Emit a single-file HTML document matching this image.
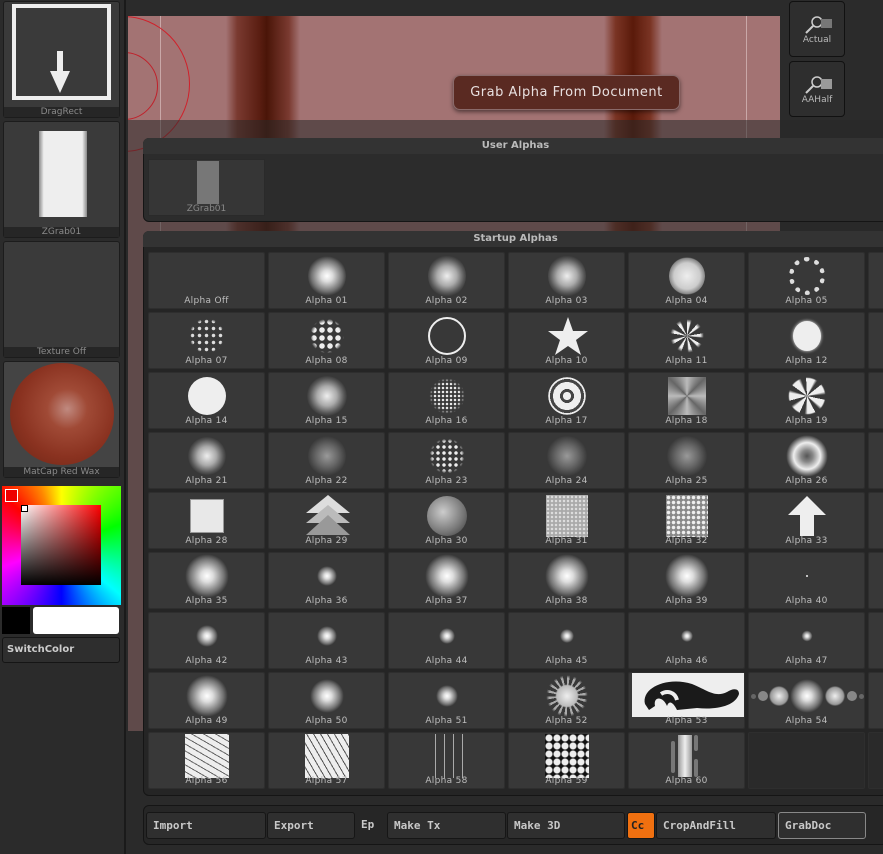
<!DOCTYPE html>
<html><head><meta charset="utf-8"><style>
*{margin:0;padding:0;box-sizing:border-box}
body{width:883px;height:854px;background:#2b2b2b;position:relative;overflow:hidden;font-family:"DejaVu Sans","Liberation Sans",sans-serif;}
.a{position:absolute}
.lp{position:absolute;left:3px;width:117px;background:#3a3a3a;border:1px solid #1c1c1c;border-radius:3px}
.lbl{position:absolute;left:0;right:0;bottom:0;height:10px;background:#262626;color:#8a8a8a;font-size:9px;text-align:center;line-height:10px}
.c{position:absolute;width:117px;height:57px;background:#383838;border:1px solid #2e2e2e;border-radius:2px}
.c span{position:absolute;left:0;right:0;bottom:2px;text-align:center;font-size:9px;color:#bdbdbd;letter-spacing:.3px}
.i{position:absolute;left:50%;top:23px;transform:translate(-50%,-50%);border-radius:50%}
.bl{background:radial-gradient(circle,#fff 0,#ddd 20%,rgba(200,200,200,.4) 55%,rgba(56,56,56,0) 70%)}
.tx{background:radial-gradient(circle,#eee 0,#aaa 35%,rgba(120,120,120,.5) 60%,rgba(56,56,56,0) 72%)}
.dk{background:radial-gradient(circle,#999 0,#666 40%,rgba(56,56,56,0) 72%)}
.dsk{background:#eee}
.btn{position:absolute;top:812px;height:27px;background:#2f2f2f;border:1px solid #161616;border-radius:3px;color:#c8c8c8;font-size:11px;font-weight:bold;line-height:25px;padding-left:6px;font-family:"DejaVu Sans Mono","Liberation Mono",monospace}
</style></head><body>
<!-- canvas -->
<div class="a" style="left:128px;top:16px;width:652px;height:715px;background:#a37373;overflow:hidden">
<div class="a" style="left:98px;top:0;width:74px;height:715px;background:linear-gradient(90deg,#a37373,#7a3a30 15%,#5a1e12 45%,#4a1508 55%,#7a3a30 85%,#a37373)"></div>
<div class="a" style="left:476px;top:0;width:58px;height:715px;background:linear-gradient(90deg,#a37373,#7a3424 20%,#5a1a0a 50%,#7a3424 80%,#a37373)"></div>
<div class="a" style="left:32px;top:0;width:1px;height:715px;background:#c9a8a8"></div>
<div class="a" style="left:618px;top:0;width:1px;height:715px;background:#c9a8a8"></div>
<div class="a" style="left:-72px;top:0;width:134px;height:136px;border:1.5px solid #d0202a;border-radius:50%"></div>
<div class="a" style="left:-38px;top:36px;width:68px;height:68px;border:1.5px solid #c0202a;border-radius:50%"></div>
</div>
<div class="a" style="left:125px;top:120px;width:758px;height:734px;background:rgba(40,40,40,.55)"></div>
<div class="a" style="left:125px;top:731px;width:758px;height:123px;background:#2a2a2a"></div>
<div class="a" style="left:780px;top:0;width:103px;height:120px;background:#2b2b2b"></div>
<div class="a" style="left:125px;top:0;width:655px;height:16px;background:#2b2b2b"></div>
<div class="a" style="left:124px;top:0;width:2px;height:854px;background:#1a1a1a"></div>
<!-- right buttons -->
<div class="a" style="left:789px;top:1px;width:56px;height:56px;background:#2e2e2e;border:1px solid #111;border-radius:4px;color:#bbb;font-size:9px;text-align:center;padding-top:33px">Actual</div>
<div class="a" style="left:789px;top:61px;width:56px;height:56px;background:#2e2e2e;border:1px solid #111;border-radius:4px;color:#bbb;font-size:9px;text-align:center;padding-top:33px">AAHalf</div>
<svg class="a" style="left:803px;top:14px" width="30" height="22"><circle cx="14" cy="8" r="5" fill="none" stroke="#ccc" stroke-width="1.5"/><line x1="10" y1="12" x2="3" y2="19" stroke="#ccc" stroke-width="2"/><rect x="18" y="5" width="11" height="9" fill="#777"/></svg>
<svg class="a" style="left:803px;top:74px" width="30" height="22"><circle cx="14" cy="8" r="5" fill="none" stroke="#ccc" stroke-width="1.5"/><line x1="10" y1="12" x2="3" y2="19" stroke="#ccc" stroke-width="2"/><rect x="18" y="5" width="11" height="10" fill="#999"/></svg>
<!-- tooltip -->
<div class="a" style="left:453px;top:75px;width:227px;height:35px;background:#5a2a22;border:1px solid #8a6a6a;border-radius:7px;color:#e8e0e0;font-size:13px;text-align:center;line-height:33px;letter-spacing:.5px;box-shadow:0 2px 4px rgba(0,0,0,.5)">Grab Alpha From Document</div>
<!-- left panel -->
<div class="lp" style="top:1px;height:117px"><div class="a" style="left:8px;top:2px;width:99px;height:96px;border:4px solid #eee"></div>
<svg class="a" style="left:45px;top:47px" width="22" height="46"><path d="M8 2h6v20h7L11 44 1 22h7z" fill="#eee"/></svg><div class="lbl">DragRect</div></div>
<div class="lp" style="top:121px;height:117px"><div class="a" style="left:35px;top:9px;width:48px;height:86px;background:linear-gradient(90deg,#888,#eee 10%,#eee 90%,#888)"></div><div class="lbl">ZGrab01</div></div>
<div class="lp" style="top:241px;height:117px"><div class="lbl">Texture Off</div></div>
<div class="lp" style="top:361px;height:117px;background:#444"><div class="a" style="left:6px;top:1px;width:104px;height:102px;border-radius:50%;background:radial-gradient(circle at 55% 45%,#c08a80 0,#a04a36 25%,#8a3220 60%,#6a2414 100%)"></div><div class="lbl">MatCap Red Wax</div></div>
<div class="a" style="left:2px;top:486px;width:119px;height:119px;background:conic-gradient(from 0deg,#ff0 0deg,#0f0 70deg,#0ff 130deg,#00f 180deg,#f0f 250deg,#f00 310deg,#f80 340deg,#ff0 360deg)"></div>
<div class="a" style="left:21px;top:505px;width:80px;height:80px;background:linear-gradient(0deg,#000,rgba(0,0,0,0)),linear-gradient(90deg,#fff,#f00)"></div>
<div class="a" style="left:5px;top:489px;width:13px;height:13px;background:#e00;border:1.5px solid #fff"></div>
<div class="a" style="left:21px;top:505px;width:7px;height:7px;background:#fff;border:1px solid #000"></div>
<div class="a" style="left:2px;top:607px;width:28px;height:27px;background:#000"></div>
<div class="a" style="left:33px;top:607px;width:86px;height:27px;background:#fff;border-radius:3px"></div>
<div class="a" style="left:2px;top:637px;width:118px;height:26px;background:#2e2e2e;border:1px solid #151515;border-radius:3px;color:#ccc;font-size:10px;font-weight:bold;line-height:24px;padding-left:4px">SwitchColor</div>
<!-- user alphas -->
<div class="a" style="left:143px;top:138px;width:745px;height:84px;background:#2c2c2c;border:1px solid #151515;border-radius:6px"></div>
<div class="a" style="left:143px;top:138px;width:745px;height:16px;border-radius:6px 6px 0 0;background:#333;color:#bbb;font-size:10px;font-weight:bold;text-align:center;line-height:15px">User Alphas</div>
<div class="a" style="left:148px;top:159px;width:117px;height:57px;background:#363636;border:1px solid #2a2a2a"><div class="a" style="left:48px;top:1px;width:22px;height:43px;background:#777"></div><span class="a" style="left:0;right:0;bottom:1px;text-align:center;font-size:9px;color:#888">ZGrab01</span></div>
<!-- startup alphas -->
<div class="a" style="left:143px;top:231px;width:745px;height:565px;background:#252525;border:1px solid #151515;border-radius:6px"></div>
<div class="a" style="left:143px;top:231px;width:745px;height:16px;border-radius:6px 6px 0 0;background:#333;color:#bbb;font-size:10px;font-weight:bold;text-align:center;line-height:15px">Startup Alphas</div>

<div class="c" style="left:148px;top:252px"><span>Alpha Off</span></div>
<div class="c" style="left:268px;top:252px"><div class="i bl" style="width:38px;height:42px"></div><span>Alpha 01</span></div>
<div class="c" style="left:388px;top:252px"><div class="i tx" style="width:38px;height:42px"></div><span>Alpha 02</span></div>
<div class="c" style="left:508px;top:252px"><div class="i tx" style="width:38px;height:42px"></div><span>Alpha 03</span></div>
<div class="c" style="left:628px;top:252px"><div class="i" style="width:36px;height:38px;background:radial-gradient(circle,#eee,#ccc 50%,#888 68%,rgba(56,56,56,0) 72%)"></div><span>Alpha 04</span></div>
<div class="c" style="left:748px;top:252px"><div class="i" style="width:36px;height:38px;border:5px dotted #ddd"></div><span>Alpha 05</span></div>
<div class="c" style="left:868px;top:252px"></div>

<div class="c" style="left:148px;top:312px"><div class="i" style="width:36px;height:36px;background:radial-gradient(circle,#ddd 1.5px,transparent 2px) 0 0/7px 7px;-webkit-mask:radial-gradient(circle,#000 60%,transparent 70%)"></div><span>Alpha 07</span></div>
<div class="c" style="left:268px;top:312px"><div class="i" style="width:34px;height:36px;background:radial-gradient(circle,#eee 2.5px,transparent 3px) 0 0/8px 8px;-webkit-mask:radial-gradient(circle,#000 55%,transparent 70%)"></div><span>Alpha 08</span></div>
<div class="c" style="left:388px;top:312px"><div class="i" style="width:38px;height:38px;border:2.5px solid #eee"></div><span>Alpha 09</span></div>
<div class="c" style="left:508px;top:312px"><svg class="a" style="left:39px;top:3px" width="40" height="40"><path d="M20 1l5 14h15l-12 9 5 15-13-9-13 9 5-15L0 15h15z" fill="#eee"/></svg><span>Alpha 10</span></div>
<div class="c" style="left:628px;top:312px"><div class="i" style="width:34px;height:34px;background:repeating-conic-gradient(#eee 0 12deg,rgba(56,56,56,0) 18deg 40deg);-webkit-mask:radial-gradient(circle,#000 55%,transparent 70%)"></div><span>Alpha 11</span></div>
<div class="c" style="left:748px;top:312px"><div class="i dsk" style="width:28px;height:30px;box-shadow:0 0 3px #eee"></div><span>Alpha 12</span></div>
<div class="c" style="left:868px;top:312px"></div>

<div class="c" style="left:148px;top:372px"><div class="i dsk" style="width:38px;height:38px"></div><span>Alpha 14</span></div>
<div class="c" style="left:268px;top:372px"><div class="i tx" style="width:40px;height:40px"></div><span>Alpha 15</span></div>
<div class="c" style="left:388px;top:372px"><div class="i" style="width:36px;height:36px;background:radial-gradient(circle,#eee 1px,transparent 1.5px) 0 0/4px 4px;-webkit-mask:radial-gradient(circle,#000 50%,transparent 70%)"></div><span>Alpha 16</span></div>
<div class="c" style="left:508px;top:372px"><div class="i" style="width:38px;height:38px;background:repeating-radial-gradient(circle,#eee 0 4px,#444 4px 7px,#eee 7px 10px);-webkit-mask:radial-gradient(circle,#000 69%,transparent 71%)"></div><span>Alpha 17</span></div>
<div class="c" style="left:628px;top:372px"><div class="i" style="width:38px;height:38px;border-radius:0;background:conic-gradient(#bbb,#666,#bbb,#666,#bbb,#666,#bbb,#666,#bbb)"></div><span>Alpha 18</span></div>
<div class="c" style="left:748px;top:372px"><div class="i" style="width:38px;height:38px;background:repeating-conic-gradient(#eee 0 25deg,rgba(56,56,56,0) 35deg 51deg);-webkit-mask:radial-gradient(circle,#000 65%,transparent 70%)"></div><span>Alpha 19</span></div>
<div class="c" style="left:868px;top:372px"></div>

<div class="c" style="left:148px;top:432px"><div class="i tx" style="width:38px;height:38px"></div><span>Alpha 21</span></div>
<div class="c" style="left:268px;top:432px"><div class="i dk" style="width:38px;height:40px"></div><span>Alpha 22</span></div>
<div class="c" style="left:388px;top:432px"><div class="i" style="width:36px;height:36px;background:radial-gradient(circle,#eee 1.5px,transparent 2px) 0 0/6px 6px;-webkit-mask:radial-gradient(circle,#000 55%,transparent 70%)"></div><span>Alpha 23</span></div>
<div class="c" style="left:508px;top:432px"><div class="i dk" style="width:40px;height:40px"></div><span>Alpha 24</span></div>
<div class="c" style="left:628px;top:432px"><div class="i dk" style="width:40px;height:40px"></div><span>Alpha 25</span></div>
<div class="c" style="left:748px;top:432px"><div class="i" style="width:42px;height:42px;background:radial-gradient(circle,#555 0,#888 20%,#eee 45%,rgba(56,56,56,0) 70%)"></div><span>Alpha 26</span></div>
<div class="c" style="left:868px;top:432px"></div>

<div class="c" style="left:148px;top:492px"><div class="i" style="width:34px;height:34px;border-radius:0;background:#e8e8e8;border:1px solid #999"></div><span>Alpha 28</span></div>
<div class="c" style="left:268px;top:492px"><svg class="a" style="left:36px;top:2px" width="46" height="42"><path d="M23 0L45 18H1z" fill="#ddd"/><path d="M23 10L45 28H1z" fill="#bbb"/><path d="M23 20L45 40H1z" fill="#999"/></svg><span>Alpha 29</span></div>
<div class="c" style="left:388px;top:492px"><div class="i" style="width:40px;height:40px;background:radial-gradient(circle at 40% 40%,#ccc,#777 60%,#333)"></div><span>Alpha 30</span></div>
<div class="c" style="left:508px;top:492px"><div class="i" style="width:42px;height:42px;border-radius:0;background:#aaa radial-gradient(circle,#ddd 1px,transparent 1.5px) 0 0/4px 4px"></div><span>Alpha 31</span></div>
<div class="c" style="left:628px;top:492px"><div class="i" style="width:42px;height:42px;border-radius:0;background:#888 radial-gradient(circle,#eee 1.5px,transparent 2px) 0 0/5px 5px"></div><span>Alpha 32</span></div>
<div class="c" style="left:748px;top:492px"><svg class="a" style="left:38px;top:2px" width="40" height="42"><path d="M20 1L39 20H27v21H13V20H1z" fill="#eee"/></svg><span>Alpha 33</span></div>
<div class="c" style="left:868px;top:492px"></div>

<div class="c" style="left:148px;top:552px"><div class="i bl" style="width:44px;height:44px"></div><span>Alpha 35</span></div>
<div class="c" style="left:268px;top:552px"><div class="i bl" style="width:20px;height:20px"></div><span>Alpha 36</span></div>
<div class="c" style="left:388px;top:552px"><div class="i bl" style="width:44px;height:44px"></div><span>Alpha 37</span></div>
<div class="c" style="left:508px;top:552px"><div class="i bl" style="width:44px;height:44px"></div><span>Alpha 38</span></div>
<div class="c" style="left:628px;top:552px"><div class="i bl" style="width:44px;height:44px"></div><span>Alpha 39</span></div>
<div class="c" style="left:748px;top:552px"><div class="i dsk" style="width:2px;height:2px"></div><span>Alpha 40</span></div>
<div class="c" style="left:868px;top:552px"></div>

<div class="c" style="left:148px;top:612px"><div class="i bl" style="width:22px;height:22px"></div><span>Alpha 42</span></div>
<div class="c" style="left:268px;top:612px"><div class="i bl" style="width:20px;height:20px"></div><span>Alpha 43</span></div>
<div class="c" style="left:388px;top:612px"><div class="i bl" style="width:16px;height:16px"></div><span>Alpha 44</span></div>
<div class="c" style="left:508px;top:612px"><div class="i bl" style="width:14px;height:14px"></div><span>Alpha 45</span></div>
<div class="c" style="left:628px;top:612px"><div class="i bl" style="width:12px;height:12px"></div><span>Alpha 46</span></div>
<div class="c" style="left:748px;top:612px"><div class="i bl" style="width:11px;height:11px"></div><span>Alpha 47</span></div>
<div class="c" style="left:868px;top:612px"></div>

<div class="c" style="left:148px;top:672px"><div class="i bl" style="width:42px;height:42px"></div><span>Alpha 49</span></div>
<div class="c" style="left:268px;top:672px"><div class="i bl" style="width:34px;height:34px"></div><span>Alpha 50</span></div>
<div class="c" style="left:388px;top:672px"><div class="i bl" style="width:22px;height:22px"></div><span>Alpha 51</span></div>
<div class="c" style="left:508px;top:672px"><div class="i" style="width:42px;height:42px;background:radial-gradient(circle,#eee 0,#bbb 35%,transparent 40%),repeating-conic-gradient(#aaa 0 8deg,transparent 8deg 20deg);-webkit-mask:radial-gradient(circle,#000 60%,transparent 70%)"></div><span>Alpha 52</span></div>
<div class="c" style="left:628px;top:672px"><div class="a" style="left:3px;top:0;width:112px;height:44px;background:#eee"></div><svg class="a" style="left:8px;top:3px" width="104" height="38"><path d="M8 28C4 12 30 0 55 8C70 14 78 22 90 16C96 12 102 12 102 18C98 30 80 34 60 32L40 34C36 26 32 24 30 30C26 20 16 20 18 30L12 34z" fill="#1a1a1a"/><path d="M24 18C30 14 38 16 40 24" stroke="#eee" stroke-width="4" fill="none"/></svg><span>Alpha 53</span></div>
<div class="c" style="left:748px;top:672px"><div class="i bl" style="width:34px;height:34px"></div><div class="a" style="left:20px;top:13px;width:20px;height:20px;border-radius:50%;background:radial-gradient(circle,#eee,#999 60%,transparent 72%)"></div><div class="a" style="left:76px;top:13px;width:20px;height:20px;border-radius:50%;background:radial-gradient(circle,#eee,#999 60%,transparent 72%)"></div><div class="a" style="left:9px;top:18px;width:10px;height:10px;border-radius:50%;background:#888"></div><div class="a" style="left:98px;top:18px;width:10px;height:10px;border-radius:50%;background:#888"></div><div class="a" style="left:2px;top:21px;width:5px;height:5px;border-radius:50%;background:#666"></div><div class="a" style="left:110px;top:21px;width:5px;height:5px;border-radius:50%;background:#666"></div><span>Alpha 54</span></div>
<div class="c" style="left:868px;top:672px"></div>

<div class="c" style="left:148px;top:732px"><div class="i" style="width:44px;height:44px;border-radius:0;background:#eee repeating-linear-gradient(30deg,transparent 0 5px,#666 5px 6px)"></div><span>Alpha 56</span></div>
<div class="c" style="left:268px;top:732px"><div class="i" style="width:44px;height:44px;border-radius:0;background:#eee repeating-linear-gradient(60deg,transparent 0 5px,#555 5px 6px)"></div><span>Alpha 57</span></div>
<div class="c" style="left:388px;top:732px"><div class="i" style="width:40px;height:44px;border-radius:0;background:repeating-linear-gradient(90deg,transparent 0 8px,#aaa 8px 9px)"></div><span>Alpha 58</span></div>
<div class="c" style="left:508px;top:732px"><div class="i" style="width:44px;height:44px;border-radius:0;background:#111 radial-gradient(circle,#eee 3px,transparent 4px) 0 0/8px 8px"></div><span>Alpha 59</span></div>
<div class="c" style="left:628px;top:732px"><div class="a" style="left:49px;top:2px;width:14px;height:42px;background:linear-gradient(90deg,#999,#eee,#999)"></div><div class="a" style="left:42px;top:8px;width:4px;height:32px;background:#777;border-radius:2px"></div><div class="a" style="left:65px;top:2px;width:4px;height:16px;background:#777;border-radius:2px"></div><div class="a" style="left:65px;top:26px;width:4px;height:18px;background:#777;border-radius:2px"></div><span>Alpha 60</span></div>
<div class="c" style="left:748px;top:732px;background:#2a2a2a"></div>
<div class="c" style="left:868px;top:732px;background:#2a2a2a"></div>

<!-- bottom toolbar -->
<div class="a" style="left:143px;top:805px;width:745px;height:40px;background:#262626;border:1px solid #151515;border-radius:6px"></div>
<div class="btn" style="left:146px;width:120px">Import</div>
<div class="btn" style="left:267px;width:88px">Export</div>
<div class="a" style="left:361px;top:812px;color:#c8c8c8;font-size:11px;font-weight:bold;line-height:25px;font-family:'DejaVu Sans Mono',monospace">Ep</div>
<div class="btn" style="left:387px;width:119px">Make Tx</div>
<div class="btn" style="left:507px;width:118px">Make 3D</div>
<div class="btn" style="left:627px;width:28px;background:#f07010;color:#222;padding-left:3px">Cc</div>
<div class="btn" style="left:656px;width:120px">CropAndFill</div>
<div class="btn" style="left:778px;width:88px;border-color:#888">GrabDoc</div>
</body></html>
